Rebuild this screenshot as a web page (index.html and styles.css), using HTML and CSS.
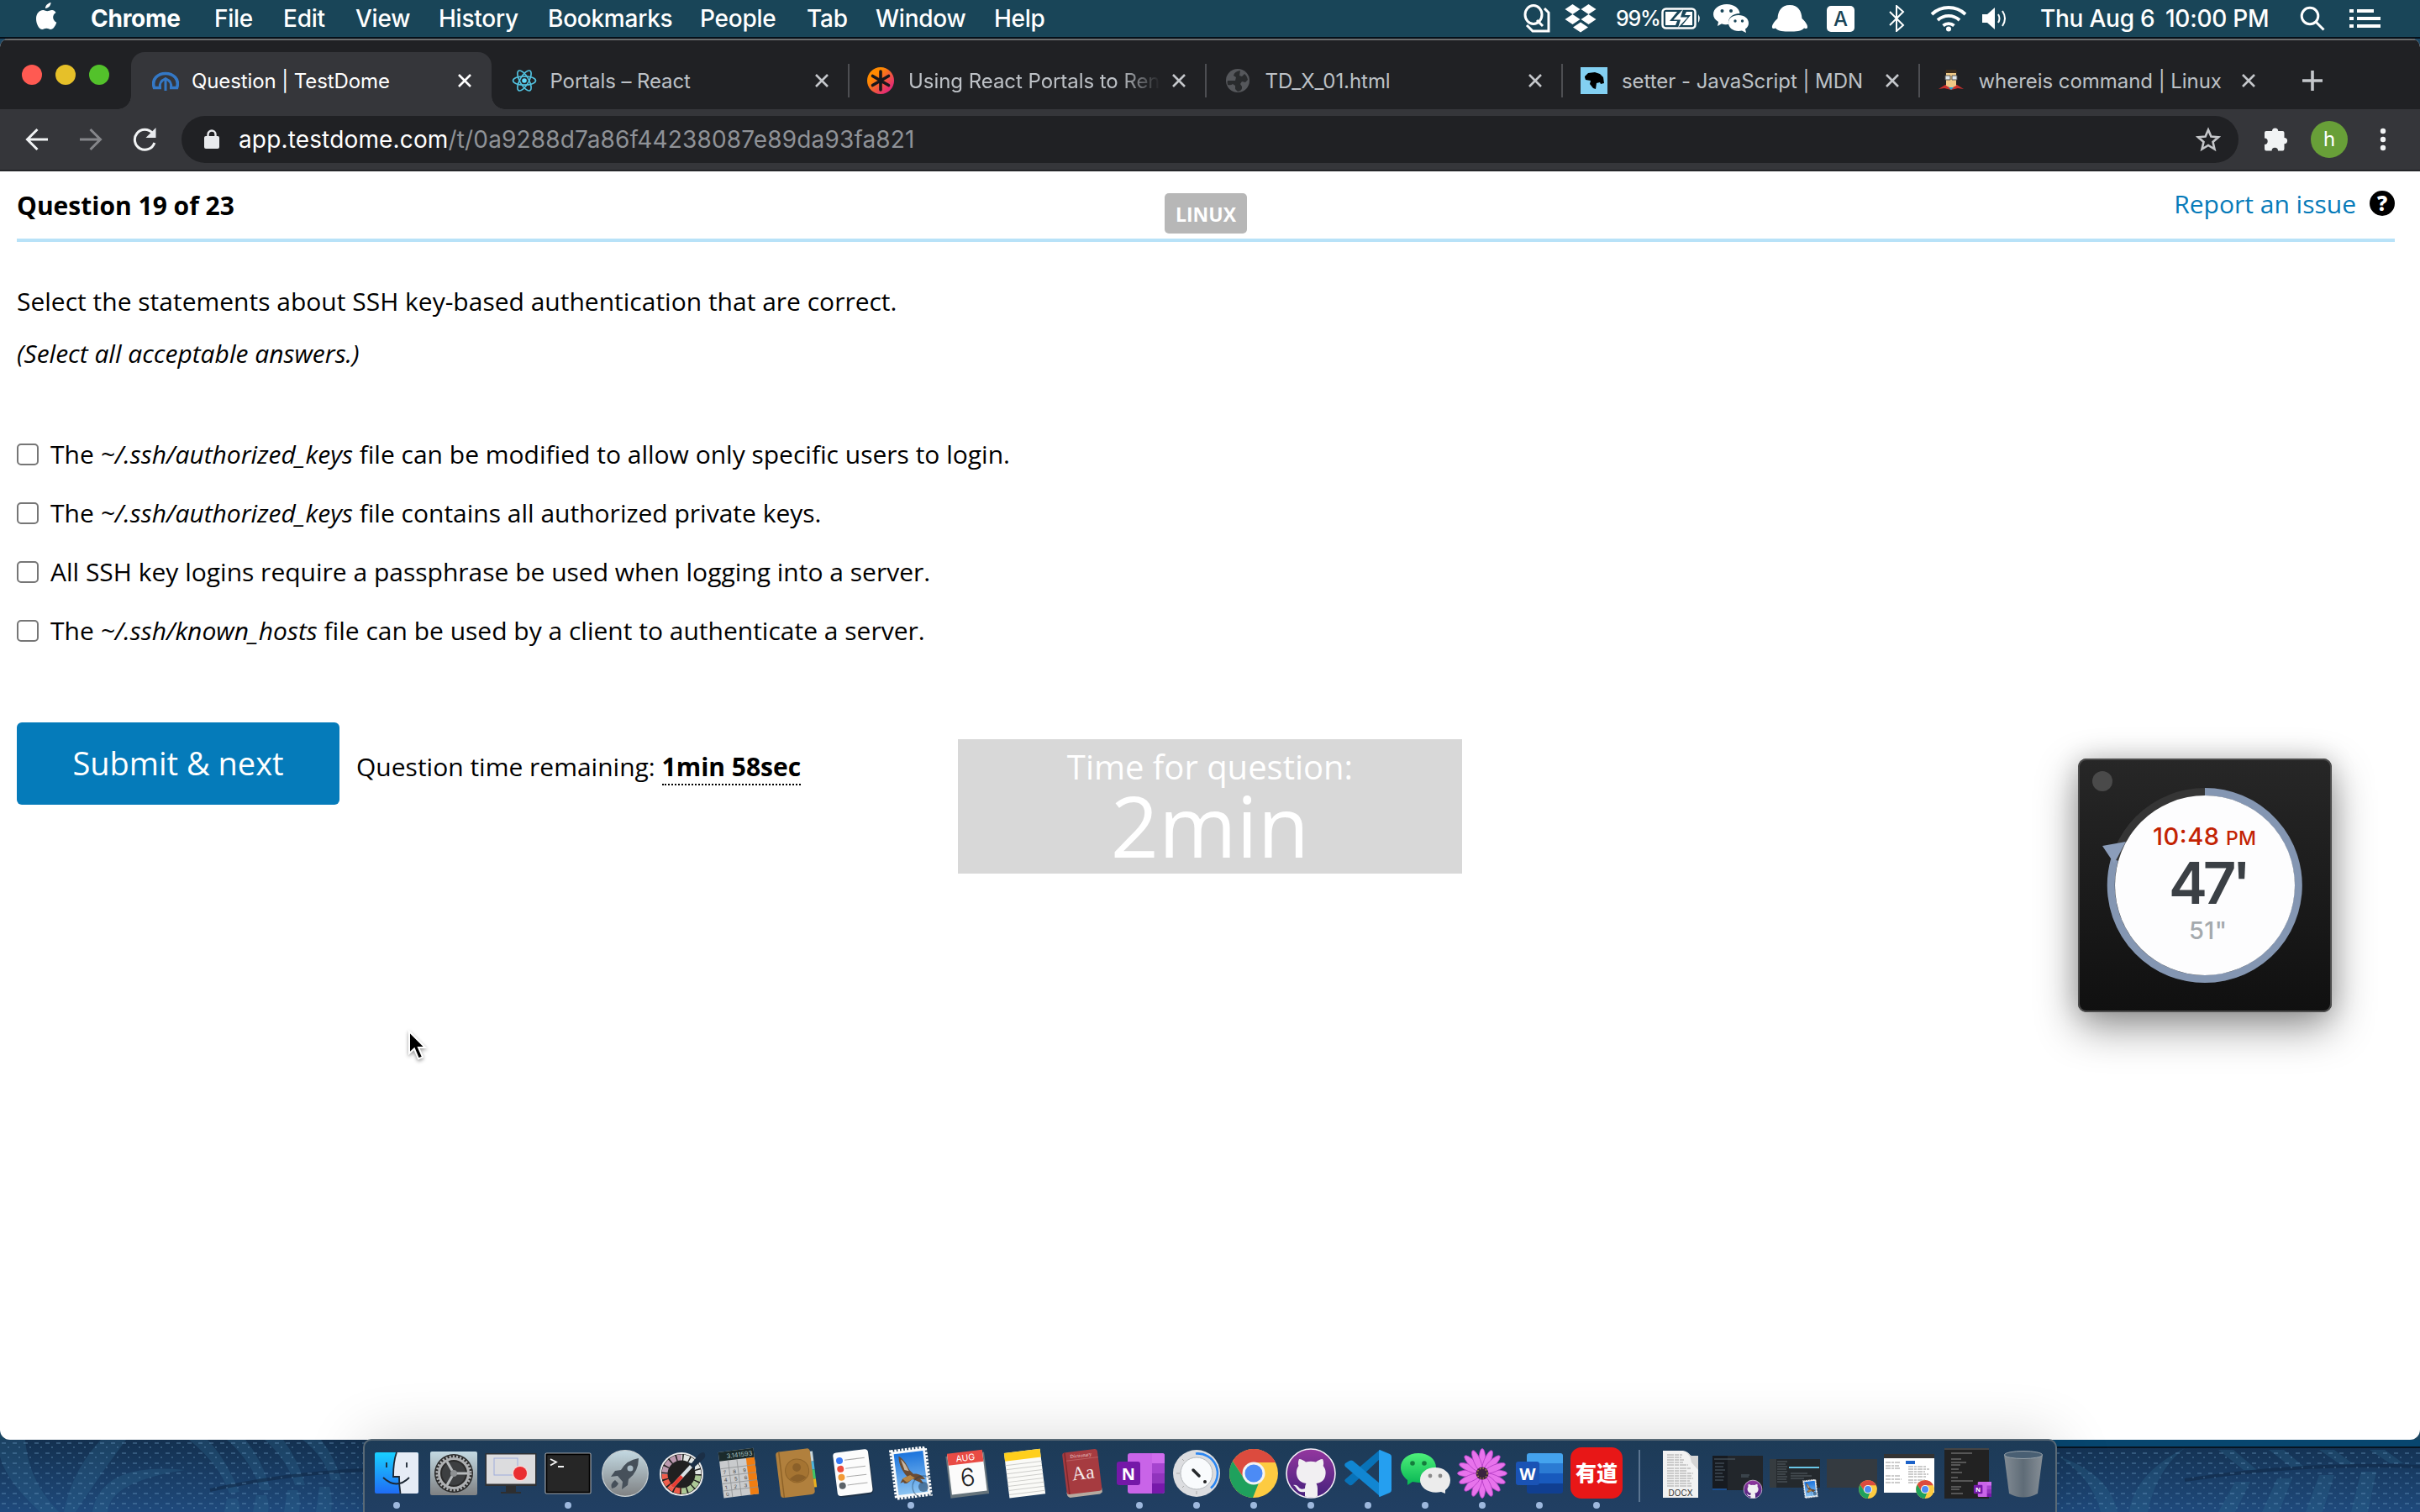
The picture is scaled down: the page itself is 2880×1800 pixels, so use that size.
FILE: index.html
```html
<!DOCTYPE html>
<html lang="en">
<head>
<meta charset="utf-8">
<title>Question | TestDome</title>
<link rel="stylesheet" href="styles.css">
</head>
<body>
<svg class="defs" width="0" height="0" aria-hidden="true">
  <defs>
    <linearGradient id="gSteel" x1="0" y1="0" x2="0" y2="1"><stop offset="0" stop-color="#c3d9e2"/><stop offset="1" stop-color="#7f8183"/></linearGradient>
    <linearGradient id="gFinder" x1="0" y1="0" x2="0" y2="1"><stop offset="0" stop-color="#19d0ff"/><stop offset="1" stop-color="#1f6cf5"/></linearGradient>
    <linearGradient id="gSky" x1="0" y1="0" x2="0" y2="1"><stop offset="0" stop-color="#1c74dc"/><stop offset="1" stop-color="#8cc4f2"/></linearGradient>
    <linearGradient id="gWechat" x1="0" y1="0" x2="0" y2="1"><stop offset="0" stop-color="#4df07a"/><stop offset="1" stop-color="#07b553"/></linearGradient>
    <linearGradient id="gOrange" x1="0" y1="0" x2="1" y2="1"><stop offset=".3" stop-color="#ff8a00"/><stop offset=".8" stop-color="#e52e71"/></linearGradient>
    <linearGradient id="gTrash" x1="0" y1="0" x2="1" y2="0"><stop offset="0" stop-color="#8d949a"/><stop offset=".5" stop-color="#66717a"/><stop offset="1" stop-color="#92989d"/></linearGradient>
    <linearGradient id="gPurple" x1="0" y1="0" x2="0" y2="1"><stop offset="0" stop-color="#94379f"/><stop offset="1" stop-color="#45207c"/></linearGradient>
    <pattern id="dashes" width="13" height="12" patternUnits="userSpaceOnUse"><path d="M2 4h5M9 9h2" stroke="#6f9cc4" stroke-width="1.800" opacity=".34"/></pattern>
    <symbol id="chrome" viewBox="0 0 64 64">
      <circle cx="32" cy="32" r="29" fill="#fdcb41"/>
      <path d="M32 3A29 29 0 0 1 58 19H32A13 13 0 0 0 20.500 38L7 17.500A29 29 0 0 1 32 3Z" fill="#dc4b3e"/>
      <path d="M7 17.500 20.700 38.500A13 13 0 0 0 38 43.500L31 61A29 29 0 0 1 7 17.500Z" fill="#1fa15d"/>
      <circle cx="32" cy="32" r="13.500" fill="#f3f3f3"/><circle cx="32" cy="32" r="10.500" fill="#4c8bf5"/>
    </symbol>
    <symbol id="github" viewBox="0 0 64 64">
      <circle cx="32" cy="32" r="29" fill="url(#gPurple)" stroke="#f5f0f7" stroke-width="1.600"/>
      <path d="M18 15c3 0 6 2 8 3.500a27 27 0 0 1 12 0c2-1.500 5-3.500 8-3.500 1.500 3 1.300 6 .7 8C49 26 50 29 49.500 33c-.7 6.500-4 10-11 11 1 2 1.500 4 1.500 6v9.500a29 29 0 0 1-15 0V54c-5 1-8-.5-10-4-1-2-2-3-4-4 3-1 5 .5 6.500 2.500C19 50.500 21 51.500 25 50c0-2 .5-4.500 1.500-6-7-1-10.500-4.500-11.500-11-.5-4 .5-7 2.500-10-.7-2-.9-5 .5-8Z" fill="#f1eff2"/>
    </symbol>
    <symbol id="mail" viewBox="0 0 64 64">
      <g transform="rotate(-7 32 32)"><rect x="11.500" y="3.500" width="41" height="56" fill="none" stroke="#fff" stroke-width="4" stroke-dasharray="2.600 1.600"/><rect x="12" y="4" width="40" height="55" fill="#f6f8fa"/><rect x="14.500" y="7" width="35" height="49" fill="url(#gSky)"/>
      <path d="M20 10c5 3 8 10 11 18l4 5c5 0 11 3 13 8l-6-1c2 2 3 4 3 6-4-2-8-5-12-7l-5 3c-3 2-6 1-6-1l-4 1 3-4 6-3c-5-7-8-16-7-25Z" fill="#6b4c33"/><path d="M22 14c4 4 6 9 8 15l-5-2Z" fill="#c6b6a3"/><path d="M21 37l10-3 5 4-10 4Z" fill="#b78645"/></g>
      <circle cx="47" cy="48" r="13" fill="none" stroke="#1f3b57" stroke-width="1.300" opacity=".45"/><circle cx="47" cy="48" r="6" fill="#22405f" opacity=".55"/>
    </symbol>
    <symbol id="onenote" viewBox="0 0 64 64">
      <rect x="18" y="8" width="44" height="48" rx="3" fill="#c964e8"/><path d="M47 8h12a3 3 0 0 1 3 3v9H47Z" fill="#d06ced"/><path d="M47 20h15v12H47Z" fill="#a644cf"/><path d="M47 32h15v12H47Z" fill="#9134bd"/><path d="M47 44h15v9a3 3 0 0 1-3 3H47Z" fill="#7719aa"/>
      <rect x="5" y="18" width="28" height="28" rx="3" fill="#7518a8"/><text x="19" y="40" class="glyph-n">N</text>
    </symbol>
  </defs>
</svg>

<nav class="menubar">
  <svg class="apple" viewBox="0 0 27 34"><path d="M18.500 0c.3 3-2.600 7-6.500 7C11.700 4 15 .6 18.500 0ZM24.500 12c-5 3-4 9.500.8 11.700C24 27.500 21.500 32 18.300 32c-2 0-2.700-1.200-5-1.200s-3 1.200-5 1.200C4.500 32 1 25.500 1 19.500 1 12.500 5.400 9 9.200 9c2.200 0 3.600 1.300 5 1.300S17.400 9 20 9c1.600 0 3.500 1 4.500 3Z"/></svg>
  <span class="app-name">Chrome</span><span>File</span><span>Edit</span><span>View</span><span>History</span><span>Bookmarks</span><span>People</span><span>Tab</span><span>Window</span><span>Help</span>
  <svg width="34" height="34" viewBox="0 0 34 34"><g class="line3"><ellipse cx="13" cy="12.500" rx="10" ry="11"/><path d="m17 19 7 7M26 5l5 5v22H12l-7-7"/></g></svg>
  <svg width="38" height="34" viewBox="0 0 38 34"><path d="m9.500 0 9 6-9 6-9-6Zm19 0 9 6-9 6-9-6Zm-19 12 9 6-9 6-9-6Zm19 0 9 6-9 6-9-6ZM19 21.500l9 6-9 6-9-6Z"/></svg>
  <span class="percent">99%</span>
  <svg width="48" height="26" viewBox="0 0 48 26"><rect x="1.500" y="1.500" width="39" height="23" rx="4" class="line25"/><path d="M44 8q3.500 5 0 10Z"/><path d="M5 5h14l-9 11h9l-2 5H5Zm25 0h7v16H25l10-12h-7Z"/><path d="M26 2 14.500 14.500H23L20 24l11.500-12.500H23Z"/></svg>
  <svg width="42" height="34" viewBox="0 0 42 34"><path d="M16 0c9 0 15 5 15.500 11C23 11 17 16 18 24c-3 .4-6 0-8-.8L5 26l1-5C2 18.500 0 15.500 0 12 0 5 7 0 16 0Z"/><path d="M30 13c7 0 12 4 12 9.500 0 3-1.500 5.500-4 7l1 4.500-5-2.500c-9 2-16-3-16-9S23 13 30 13Z"/><g class="holes"><circle cx="10.500" cy="8" r="2"/><circle cx="21" cy="8" r="2"/><circle cx="26" cy="20" r="1.700"/><circle cx="34.500" cy="20" r="1.700"/></g></svg>
  <svg width="44" height="32" viewBox="0 0 44 32"><path d="M22 0c10 0 14 7 14.500 16C41 20 43.500 24 43 27c-1 2-4 .5-4 .5C36 31.500 29 31.500 22 31.500S8 31.500 5 27.500c0 0-3 1.500-4-.5-.5-3 2-7 6.500-11C8 7 12 0 22 0Z"/></svg>
  <span class="input-source">A</span>
  <svg width="24" height="32" viewBox="0 0 24 32"><path class="line2" d="m3 8 16 16-8 7V1l8 7L3 24"/></svg>
  <svg width="44" height="32" viewBox="0 0 44 32"><g class="line35"><path d="M2 11a29 29 0 0 1 40 0M9 18a19 19 0 0 1 26 0M15.500 24.500a10 10 0 0 1 13 0" /></g><circle cx="22" cy="28.500" r="3"/></svg>
  <svg width="32" height="28" viewBox="0 0 32 28"><path d="M1 9h6l9-8v26l-9-8H1Z"/><path class="line2" d="M20 9q3 5 0 10M25 5q6 9 0 18"/></svg>
  <span>Thu Aug 6</span><span>10:00 PM</span>
  <svg width="30" height="30" viewBox="0 0 30 30"><g class="line3"><circle cx="12" cy="12" r="9.800"/><path d="m19 19 9.500 9.500"/></g></svg>
  <svg width="38" height="24" viewBox="0 0 38 24"><path d="M0 1h5v4H0Zm9 0h20v4H9ZM0 10h5v4H0Zm9 0h28v4H9ZM0 19h5v4H0Zm9 0h28v4H9Z"/></svg>
</nav>

<main class="window">
  <div class="tabstrip">
    <div class="lights"><i class="light red"></i><i class="light yellow"></i><i class="light green"></i></div>
    <div class="tab active">
      <svg class="favicon" viewBox="0 0 32 32"><g fill="none" stroke="#3478c5" stroke-width="3.600"><path d="M11 24.500H2.500C-1 14 7 7.500 16 7.500s17 6.500 13.500 17H21"/><path d="M16 28V14M9.500 24.500Q8 17 16 13.500q8 3.500 6.500 11" stroke-width="3"/></g></svg>
      <span class="title">Question | TestDome</span><svg class="close" viewBox="0 0 16 16"><path d="m1 1 14 14M15 1 1 15"/></svg>
    </div>
    <div class="tab bare">
      <svg class="favicon" viewBox="0 0 32 32"><g fill="none" stroke="#52c1de" stroke-width="1.700"><ellipse cx="16" cy="16" rx="13.500" ry="5.200"/><ellipse cx="16" cy="16" rx="13.500" ry="5.200" transform="rotate(60 16 16)"/><ellipse cx="16" cy="16" rx="13.500" ry="5.200" transform="rotate(120 16 16)"/></g><circle cx="16" cy="16" r="2.800" fill="#61dafb"/></svg>
      <span class="title">Portals – React</span><svg class="close" viewBox="0 0 16 16"><path d="m1 1 14 14M15 1 1 15"/></svg>
    </div>
    <div class="tab">
      <svg class="favicon" viewBox="0 0 32 32"><circle cx="16" cy="16" r="16" fill="url(#gOrange)"/><g stroke="#17171b" stroke-width="3.600" stroke-linecap="round"><path d="M16 5v22M6.500 10.500l19 11M6.500 21.500l19-11"/></g></svg>
      <span class="title faded">Using React Portals to Ren</span><svg class="close" viewBox="0 0 16 16"><path d="m1 1 14 14M15 1 1 15"/></svg>
    </div>
    <div class="tab">
      <svg class="favicon" viewBox="0 0 32 32"><circle cx="16" cy="16" r="14" fill="#55575b"/><path d="M19 4q-7 1-8 6l3 2-1 4H4q-1 2 0 5 4 1 6-1l3 2v4l3 3q6-1 5-6l-2-3 2-3 4 1 3-3q-1-5-4-7l-3 3-3-1Z" fill="#222326" opacity=".85"/></svg>
      <span class="title">TD_X_01.html</span><svg class="close" viewBox="0 0 16 16"><path d="m1 1 14 14M15 1 1 15"/></svg>
    </div>
    <div class="tab">
      <svg class="favicon" viewBox="0 0 32 32"><path fill="#83d0f2" d="M0 0h32v32H0z"/><path d="M5 11 9 7l8-1 6 2 4 4 1 7-4 1-1-2-4 1-1 7-3-1-4-5 1-4-6-1-1-3Z"/></svg>
      <span class="title">setter - JavaScript | MDN</span><svg class="close" viewBox="0 0 16 16"><path d="m1 1 14 14M15 1 1 15"/></svg>
    </div>
    <div class="tab">
      <svg class="favicon" viewBox="0 0 32 32"><path d="m1 26 8-5h14l8 5-7-1-8 2-8-2Z" fill="#c9302c"/><path d="M10 7h12v15l-6 3-6-3Z" fill="#efc986"/><path d="M10 3h12l1 4H9Z" fill="#3b2c1c"/><path d="M9 10h6v5H9Zm8 0h6v5h-6Z" fill="#dfe7ec" stroke="#555"/><path d="m13 24 3 3 3-3Z" fill="#1aa5dd"/></svg>
      <span class="title">whereis command | Linux</span><svg class="close" viewBox="0 0 16 16"><path d="m1 1 14 14M15 1 1 15"/></svg>
    </div>
    <svg class="newtab" viewBox="0 0 26 26"><path d="M13 1v24M1 13h24"/></svg>
  </div>

  <div class="toolbar">
    <svg width="28" height="28" viewBox="0 0 28 28"><path d="M27 14H3M14.500 2 2.500 14l12 12" class="tool"/></svg>
    <svg width="28" height="28" viewBox="0 0 28 28"><path d="M1 14h24M13.500 2l12 12-12 12" class="tool dim"/></svg>
    <svg width="30" height="30" viewBox="0 0 30 30"><path d="M24.500 7.500A12 12 0 1 0 26.800 19" class="tool"/><path d="M28.500 1v12h-12Z" fill="#e8eaed"/></svg>
    <div class="omnibox">
      <svg width="18" height="24" viewBox="0 0 18 24"><rect y="8" width="18" height="15" rx="2" fill="#e8eaed"/><path d="M4.500 9V6a4.500 4.500 0 0 1 9 0v3" fill="none" stroke="#e8eaed" stroke-width="2.400"/></svg>
      <span class="url"><b>app.testdome.com</b>/t/0a9288d7a86f44238087e89da93fa821</span>
      <svg width="30" height="30" viewBox="0 0 30 30"><path d="m15 3.500 3.400 8 8.600.8-6.500 5.700 2 8.500-7.500-4.500L7.500 26.500l2-8.500L3 12.300l8.600-.8Z" fill="none" stroke="#c4c6c9" stroke-width="2.600"/></svg>
    </div>
    <svg class="puzzle" width="30" height="30" viewBox="0 0 30 30"><path d="M11 5a3.600 3.600 0 0 1 7.200 0h5.300q2 0 2 2v6a3.600 3.600 0 0 1 0 7.200V26q0 2.500-2 2.500h-5.500a3.700 3.700 0 0 0-7.400 0H4q-2 0-2-2.500v-5a3.700 3.700 0 0 0 0-7.400V7q0-2 2-2Z"/></svg>
    <span class="avatar">h</span>
    <svg width="8" height="28" viewBox="0 0 8 28"><g fill="#f1f3f4"><circle cx="4" cy="4" r="3.200"/><circle cx="4" cy="14" r="3.200"/><circle cx="4" cy="24" r="3.200"/></g></svg>
  </div>

  <section class="page">
    <header class="page-head">
      <h1>Question 19 of 23</h1>
      <span class="tag">LINUX</span>
      <div class="report"><a>Report an issue</a><span class="help">?</span></div>
    </header>
    <p class="prompt">Select the statements about SSH key-based authentication that are correct.</p>
    <p class="hint">(Select all acceptable answers.)</p>
    <div class="options">
      <label><i class="box"></i><span>The <em>~/.ssh/authorized_keys</em> file can be modified to allow only specific users to login.</span></label>
      <label><i class="box"></i><span>The <em>~/.ssh/authorized_keys</em> file contains all authorized private keys.</span></label>
      <label><i class="box"></i><span>All SSH key logins require a passphrase be used when logging into a server.</span></label>
      <label><i class="box"></i><span>The <em>~/.ssh/known_hosts</em> file can be used by a client to authenticate a server.</span></label>
    </div>
    <div class="actions">
      <button class="submit">Submit &amp; next</button>
      <span class="remaining">Question time remaining: <b>1min 58sec</b></span>
    </div>
  </section>
</main>

<aside class="toast"><span class="toast-label">Time for question:</span><span class="toast-time">2min</span></aside>

<aside class="timer">
  <svg width="302" height="302" viewBox="0 0 302 302">
    <circle cx="29" cy="27" r="12" fill="#4a4a4a"/>
    <circle cx="151" cy="151" r="111.500" fill="none" stroke="#353535" stroke-width="9"/>
    <path d="M151 39.500A111.500 111.500 0 1 1 43.500 120.500" fill="none" stroke="#8496b2" stroke-width="9"/>
    <path d="m29 104 28-5-14 26-4-6Z" fill="#8b9dba"/>
    <circle cx="151" cy="151" r="107" fill="#fdfdfe"/>
    <text x="89" y="103" class="t-end" textLength="79">10:48</text><text x="176" y="103" class="t-pm" textLength="36">PM</text>
    <text x="108" y="173" class="t-min" textLength="98">47'</text>
    <text x="132" y="215" class="t-sec" textLength="45">51"</text>
  </svg>
</aside>

<svg class="cursor" width="28" height="40" viewBox="0 0 28 40"><path d="M4 3v26l6-5.500 5 12 5-2.200-5-11.300h8Z" stroke="#fff" stroke-width="2"/></svg>

<div class="desk">
  <svg class="wallpaper" viewBox="0 0 2880 86" preserveAspectRatio="none">
    <g fill="#2f6a90" opacity=".3">
      <path d="M0 0h30q4 50 40 86H48Q8 50 0 20ZM120 0h30q-30 40-60 86H76q10-50 44-86ZM225 0h22q20 20 38 62l-12 2Q262 30 225 0ZM270 0h22q20 24 30 60h-12Q300 26 270 0ZM315 0h22q18 24 26 54h-12Q342 24 315 0ZM360 0h22q16 20 24 48h-12Q386 20 360 0Z"/>
      <path d="M110 86q10-60 110-50Q130 50 128 86ZM270 70h12q4 6 3 16h-18ZM305 66h12q4 10 2 20h-18ZM342 60h12q4 10 2 26h-18ZM380 56h12q4 10 2 30h-18Z"/>
      <path d="M2450 20q60 20 70 66h-20q-10-40-50-66ZM2600 10q-60 30-66 76h22q10-50 44-76ZM2660 50h18l-18 36h-20ZM2710 46h18l-16 40h-20ZM2760 42h18l-14 44h-20ZM2810 38h18l-10 48h-20ZM2640 12h18l28 24h-16ZM2700 12h18l24 20h-16ZM2760 12h18l24 18h-16ZM2820 12h18l22 16h-16Z"/>
    </g>
    <path d="M250 60Q340 40 432 36M2600 48q140-22 280-16" fill="none" stroke="#102a47" stroke-width="4" opacity=".6"/>
    <rect width="2880" height="86" fill="url(#dashes)"/>
    <path d="M2430 0h450v8H2430Z" fill="#07466f"/><path d="M2430 8h450v2H2430Z" fill="#071421"/>
  </svg>
  <div class="dock">
    <div class="app"><svg viewBox="0 0 64 64"><rect x="6" y="7" width="52" height="49" rx="2" fill="url(#gFinder)"/><path d="M32 7h24q2 0 2 2v45q0 2-2 2H36q-1-9-1-20h-7Q28 18 32 7Z" fill="#e6ecf6"/><path d="M20 19v6M44 19v6M16 37q16 15 31 0M32 7Q28 18 28 36h7q0 11 1.500 20" fill="none" stroke="#1c2733" stroke-width="1.800"/></svg><i class="run"></i></div>
    <div class="app"><svg viewBox="0 0 64 64"><rect x="4" y="6" width="56" height="52" rx="2" fill="url(#gSteel)"/><circle cx="32" cy="32" r="23" fill="#2a2a2a"/><circle cx="32" cy="32" r="17.500" fill="none" stroke="#aeb0b2" stroke-width="3"/><circle cx="32" cy="32" r="20" fill="none" stroke="#aeb0b2" stroke-width="3" stroke-dasharray="2.200 2"/><circle cx="32" cy="32" r="14" fill="#3d3f41"/><path d="M32 32h16M32 32l-8-14M32 32l-8 14" stroke="#b7babc" stroke-width="3"/><circle cx="32" cy="32" r="4" fill="#8d9092"/></svg></div>
    <div class="app"><svg viewBox="0 0 64 64"><path d="M26 46h12v8h6v2H20v-2h6Z" fill="#2d2e30"/><rect x="1.500" y="8" width="61" height="39" fill="#303133"/><rect x="3" y="9.500" width="58" height="35" fill="#dcdcde"/><rect x="12" y="14" width="28" height="20" fill="none" stroke="#9eacdc"/><circle cx="43" cy="32" r="9.500" fill="#f3d7d7"/><circle cx="43" cy="32" r="8" fill="#ea2d31"/></svg></div>
    <div class="app"><svg viewBox="0 0 64 64"><rect x="5" y="8" width="54" height="48" rx="1.500" fill="#262626" stroke="#a9abad" stroke-width="1.200"/><rect x="6.500" y="9.500" width="51" height="45" fill="none" stroke="#000" stroke-width="1.500"/><path d="m11 15 7 3.500-7 4M20 24h7" fill="none" stroke="#f2f2f2" stroke-width="1.800"/></svg><i class="run"></i></div>
    <div class="app"><svg viewBox="0 0 64 64"><circle cx="32" cy="32" r="27.300" fill="url(#gSteel)" stroke="#c9d0d3" stroke-width="1.200"/><path d="M48 14q-14 2-21 14l-7 1-5 7 8-1 6 7-1 9 7-5 1-7q12-9 12-25ZM20 40q-6 4-4 10 6-1 8-6Z" fill="#46505a"/><circle cx="38" cy="26" r="3.500" fill="#a9bac4"/></svg></div>
    <div class="app"><svg viewBox="0 0 64 64"><circle cx="31" cy="33" r="25" fill="#202020" stroke="#ececec" stroke-width="2"/><g fill="none" stroke-width="7"><path d="M31 13a20 20 0 0 1 20 20" stroke="#e2e6e4"/><path d="M51 33a20 20 0 0 1-20 20" stroke="#abc795"/><path d="M31 53a20 20 0 0 1-20-20" stroke="#ee5c4b"/><path d="M11 33a20 20 0 0 1 20-20" stroke="#ba98ae"/></g><circle cx="31" cy="33" r="20" fill="none" stroke="#202020" stroke-width="8" stroke-dasharray="1.500 6.400"/><path d="m18 47 23-25 3 3-22 24Z" fill="#d8e0e4"/><path d="m18 47 12-13 3 3-11 12Z" fill="#e83c32"/><path d="m39 19 4 1 9-11q6-4 7 0 1 4-3 7l-9 8v4Z" fill="#1b2f46"/></svg></div>
    <div class="app"><svg viewBox="0 0 64 64"><g transform="rotate(-7 32 32)"><rect x="10" y="4" width="42" height="55" fill="#c9cbcd"/><path d="M10 4h42v11H10Z" fill="#1b2a2b"/><path d="M42 15h10v44H42Z" fill="#f07d11"/><path d="M20.500 15v44M31 15v44M10 24h42M10 33h42M10 42h42M10 50.500h42" stroke="#8f9193" stroke-width=".8"/><text x="50" y="12.500" class="calc-out">3.141593</text><text x="13" y="31" class="calc-key" xml:space="preserve">7   8   9</text><text x="13" y="40" class="calc-key" xml:space="preserve">4   5   6</text><text x="13" y="49" class="calc-key" xml:space="preserve">1   2   3</text><text x="13" y="57" class="calc-key">0</text></g></svg></div>
    <div class="app"><svg viewBox="0 0 64 64"><g transform="rotate(-7 32 32)"><path d="M49 8h5v12h-5z" fill="#c7d6dc"/><path d="M49 20h5v10h-5z" fill="#4bb3dc"/><path d="M49 30h5v11h-5z" fill="#3ec768"/><path d="M49 41h5v10h-5z" fill="#eab11e"/><rect x="10" y="4" width="41" height="55" rx="4" fill="#b1803d"/><path d="M14 4v55" stroke="#8e6228" stroke-width="1.500"/><circle cx="33" cy="29" r="14" fill="#a57432" stroke="#8f642a"/><circle cx="33" cy="25" r="5" fill="#8b6029"/><path d="M23 38q10-9 20 0-10 8-20 0Z" fill="#8b6029"/></g></svg></div>
    <div class="app"><svg viewBox="0 0 64 64"><g transform="rotate(-7 32 32)"><rect x="11" y="6" width="42" height="53" rx="5" fill="#1b2630" opacity=".5"/><rect x="10" y="5" width="42" height="52" rx="4" fill="#fcfcfc"/><circle cx="17" cy="15" r="4" fill="#3779f6"/><circle cx="17" cy="25" r="4" fill="#ee4d3e"/><circle cx="17" cy="35" r="4" fill="#f29b37"/><circle cx="17" cy="45" r="4" fill="#5b6268"/><path d="M23 15h24M23 25h24M23 35h24M23 45h24" stroke="#aaa"/></g></svg></div>
    <div class="app"><svg><use href="#mail"/></svg><i class="run"></i></div>
    <div class="app"><svg viewBox="0 0 64 64"><g transform="rotate(-7 32 32)"><rect x="8" y="9" width="46" height="50" fill="#66747c"/><rect x="10" y="7" width="42" height="48" fill="#fbfbfb"/><path d="M10 6h42v14H10Z" fill="#e94b45"/><text x="31" y="17" class="cal-m">AUG</text><text x="31" y="47" class="cal-d">6</text></g></svg></div>
    <div class="app"><svg viewBox="0 0 64 64"><g transform="rotate(-7 32 32)"><rect x="10" y="5" width="43" height="54" fill="#fafaf7"/><path d="M10 5h43v10H10Z" fill="#ffcf1c"/><path d="M10 20h43M10 25h43M10 30h43M10 35h43M10 40h43M10 45h43M10 50h43M10 55h43" stroke="#cdcdca"/></g></svg></div>
    <div class="app"><svg viewBox="0 0 64 64"><g transform="rotate(-7 32 32)"><path d="M11 52h42v5l-3 2H14q-4-2-3-7Z" fill="#b6aaa0"/><rect x="11" y="5" width="42" height="50" rx="3" fill="#a63b40"/><path d="M14 5v50" stroke="#7f282d" stroke-width="1.500"/><path d="M15 15h38" stroke="#c36a6c" stroke-width=".7"/><text x="33" y="12.500" class="dict-s">Dictionary</text><text x="33" y="39" class="dict">Aa</text></g></svg></div>
    <div class="app"><svg><use href="#onenote"/></svg><i class="run"></i></div>
    <div class="app"><svg viewBox="0 0 64 64"><circle cx="32" cy="32" r="28" fill="#dcdde0"/><circle cx="32" cy="32" r="19" fill="#f9fbfd" stroke="#b4b8bc"/><path d="M31 8.500a23.500 23.500 0 0 1 18 41" fill="none" stroke="#2c87f2" stroke-width="2.600"/><path d="m28 28 7 7" stroke="#25282b" stroke-width="3.500" stroke-linecap="round"/><circle cx="42" cy="42" r="2" fill="#222"/><path d="M32 53v4M8 32h4M15 15l2 2M15 49l2-2" stroke="#aaa"/></svg><i class="run"></i></div>
    <div class="app"><svg><use href="#chrome"/></svg><i class="run"></i></div>
    <div class="app"><svg><use href="#github"/></svg><i class="run"></i></div>
    <div class="app"><svg viewBox="0 0 64 64"><path d="m5 42 5 4q2 1 4-1L46 15V4L5 39q-1.500 1.500 0 3Z" fill="#0872b8"/><path d="m5 20 5-3q2-1 4 0l32 27v15L5 24q-1.500-2 0-4Z" fill="#1186d2"/><path d="m46 4 12 5q2 1 2 3v40q0 2-2 3l-12 5q-1 0-1-1V5q0-1 1-1Z" fill="#259ff0"/></svg><i class="run"></i></div>
    <div class="app"><svg viewBox="0 0 64 64"><path d="M24 8c12 0 21 7 21 17S36 43 24 43l-7-1-6 4v-6C6 36 3 31 3 25 3 15 12 8 24 8Z" fill="url(#gWechat)"/><path d="M44 25c10 0 18 6 18 15 0 5-2 9-6 12v4l-5-2c-13 3-25-4-25-14 0-9 8-15 18-15Z" fill="#ececec"/><circle cx="17" cy="20" r="2.800" fill="#147c3c"/><circle cx="31" cy="20" r="2.800" fill="#147c3c"/><circle cx="38" cy="35" r="2.400" fill="#8a8a8a"/><circle cx="50" cy="35" r="2.400" fill="#8a8a8a"/></svg><i class="run"></i></div>
    <div class="app"><svg viewBox="0 0 64 64"><g fill="#e873ec" stroke="#b53fc6" stroke-width=".8"><g id="petals"><ellipse cx="32" cy="16" rx="4" ry="13.500"/><ellipse cx="32" cy="48" rx="4" ry="13.500"/><ellipse cx="16" cy="32" rx="13.500" ry="4"/><ellipse cx="48" cy="32" rx="13.500" ry="4"/></g><use href="#petals" transform="rotate(22.500 32 32)"/><use href="#petals" transform="rotate(45 32 32)"/><use href="#petals" transform="rotate(67.500 32 32)"/></g><circle cx="32" cy="32" r="7.500" fill="#3a2440"/><circle cx="32" cy="32" r="6" fill="none" stroke="#b18a45" stroke-width="1.500" stroke-dasharray="1.500 2"/></svg><i class="run"></i></div>
    <div class="app"><svg viewBox="0 0 64 64"><path d="M17 20V11q0-3 3-3h37q3 0 3 3v9Z" fill="#44a3ee"/><path d="M17 20h43v12H17Z" fill="#2b7bd3"/><path d="M17 32h43v12H17Z" fill="#185abd"/><path d="M17 44h43v9q0 3-3 3H20q-3 0-3-3Z" fill="#103f91"/><rect x="4" y="18" width="28" height="28" rx="3" fill="#1a53b5"/><text x="18" y="40" class="glyph-n">W</text></svg><i class="run"></i></div>
    <div class="app"><svg viewBox="0 0 64 64"><rect x="1" y="1" width="62" height="61" rx="13" fill="#e81717"/><text x="32" y="41" class="youdao">有道</text></svg><i class="run"></i></div>
    <i class="divider"></i>
    <svg class="thumb docx" viewBox="0 0 44 58"><path d="M1 1h24q6 1 9 6h9v50H1Z" fill="#f2f2f2"/><path d="M25 1q9 4 10 14l8 9V7h-8Z" fill="#d5d5d5"/><path d="M6 6h18M6 9h17M6 12h20M6 15h19M6 18h25M6 22h28M6 25h24M6 28h31M6 31h29M6 34h31M6 37h27M6 40h30M6 43h30" stroke="#a3a3a3" stroke-width="1.100" stroke-dasharray="8 1 5 1"/><text x="22" y="55" class="docx-t">DOCX</text></svg>
    <svg class="thumb" viewBox="0 0 60 60"><path fill="#22262b" d="M0 9h60v41H0z"/><path fill="#171b21" d="M0 9h18v41H0z"/><path d="M2 13h25M3 18h11M3 22h10M3 26h12M3 30h9M3 34h11M3 38h10M34 32h10M34 34h9" stroke="#53606d"/><path fill="#1b4e8f" d="M0 48h17v2H0z"/><use href="#github" x="36" y="37" width="24" height="24"/></svg>
    <svg class="thumb" viewBox="0 0 60 60"><path fill="#24292d" d="M0 13h60v34H0z"/><path fill="#363c40" d="M0 13h8v34H0z"/><path d="M9 16h12M9 19h10M9 22h12M9 25h11M9 28h12M9 31h10M9 34h12M9 37h11M9 40h12M25 30h20M25 33h25M25 36h16" stroke="#596269"/><path d="M23 23h36" stroke="#69c6e6" stroke-width="2"/><use href="#mail" x="37" y="37" width="23" height="23"/></svg>
    <svg class="thumb" viewBox="0 0 60 60"><path fill="#343a40" d="M0 13h60v34H0z"/><use href="#chrome" x="37" y="37" width="24" height="24"/></svg>
    <svg class="thumb" viewBox="0 0 60 60"><path fill="#fff" d="M0 7h60v46H0z"/><path fill="#333" d="M0 7h60v5H0z"/><path d="M2 17h18M2 21h16M2 24h18M2 33h17M2 37h19M2 41h17M29 22h22M29 25h25M29 28h20M29 31h24M29 34h22M29 38h20M29 41h15" stroke="#999" stroke-width="1.200" stroke-dasharray="6 1 3 1"/><path fill="#1c62c8" d="M26 15h11v4H26z"/><use href="#chrome" x="37" y="37" width="24" height="24"/></svg>
    <svg class="thumb" viewBox="0 0 60 60"><path fill="#222" d="M4 0h53v60H4z"/><path fill="#444" d="M4 0h53v2H4z"/><path d="M12 6h25M12 13h12M12 17h18M12 20h11M12 25h9M12 29h13M12 35h8M12 39h26M12 46h12M12 49h10M12 54h14" stroke="#8a8a8a" stroke-width="1.200"/><use href="#onenote" x="37" y="37" width="24" height="24"/></svg>
    <svg class="thumb trash" viewBox="0 0 48 58"><path d="M1 6q22-8 46 0l-6 46q-17 9-34 0Z" fill="url(#gTrash)" opacity=".9"/><ellipse cx="24" cy="6" rx="22.500" ry="4.500" fill="#495f73" stroke="#97a1a9"/></svg>
  </div>
</div>
</body>
</html>
```
FILE: styles.css
```css
* { box-sizing: border-box; }
body {
  margin: 0; width: 2880px; height: 1800px; overflow: hidden; position: relative;
  display: flex; flex-direction: column;
  background: #1c4763; font-family: Inter, "Liberation Sans", sans-serif; color: #000;
}
svg { display: block; }
i { font-style: normal; }
.defs { position: absolute; }

/* menu bar */
.menubar {
  flex: none; height: 46px; padding: 0 0 0 42px; border-bottom: 2px solid #061019;
  display: grid; align-items: center;
  grid-template-columns: 66px 147px 82px 86px 99px 130px 181px 127px 82px 141px 629px 50px 61px 54px 62px 69px 66px 72px 51px 61px 70px 149px 160px 59px 40px;
  background: #194558; color: #fff; font-size: 28px; font-weight: 500; white-space: nowrap;
}
.menubar span { letter-spacing: -.25px; }
.menubar svg { fill: #fff; }
.menubar .apple { width: 27px; height: 34px; margin-top: -4px; }
.menubar .app-name { font-weight: 700; }
.menubar .percent { font-size: 25px; letter-spacing: -1.2px; }
.menubar .input-source { width: 33px; height: 31px; margin: 0; border-radius: 5px; background: #fff; color: #194558; font-size: 24px; line-height: 31px; text-align: center; }
.line2, .line25, .line3, .line35 { fill: none; stroke: #fff; stroke-width: 2; }
.line25 { stroke-width: 2.500; }
.line3 { stroke-width: 3; }
.line35 { stroke-width: 3.800; }
.holes { fill: #194558; }

/* browser */
.window {
  flex: none; height: 1668px; overflow: hidden; display: flex; flex-direction: column;
  border-radius: 10px 10px 12px 12px; background: #fff;
}
.tabstrip {
  flex: none; height: 84px; border-top: 2px solid #6b6c6d; background: #202124;
  display: flex; align-items: flex-end;
}
.lights { width: 160px; height: 82px; padding: 29px 0 0 26px; display: flex; gap: 16px; }
.light { width: 24px; height: 24px; border-radius: 50%; }
.red { background: #ff5a52; }
.yellow { background: #e6c029; }
.green { background: #53c22b; }
.tab { position: relative; width: 424.500px; height: 68px; padding: 0 23px; display: flex; align-items: center; color: #bdc1c6; font-size: 24px; }
.tab::before { content: ""; position: absolute; left: 0; top: 14px; width: 2px; height: 40px; background: #4d4e52; }
.tab.active::before, .tab.bare::before { display: none; }
.tab.active { background: #35363a; color: #fff; margin-left: -4px; padding-left: 25px; padding-right: 24px; width: 428.500px; border-radius: 16px 16px 0 0; }
.tab.active::after {
  content: ""; position: absolute; left: -16px; right: -16px; bottom: 0; height: 16px;
  background: radial-gradient(circle at 0 0, transparent 15.500px, #35363a 16px) 0 0 / 16px 16px no-repeat, radial-gradient(circle at 100% 0, transparent 15.500px, #35363a 16px) 100% 0 / 16px 16px no-repeat;
}
.favicon { width: 32px; height: 32px; flex: none; }
.title { flex: 1; margin-left: 17px; overflow: hidden; white-space: nowrap; letter-spacing: -.05px; }
.active .title, .bare .title { margin-left: 15px; letter-spacing: -.1px; }
.faded { max-width: 300px; -webkit-mask-image: linear-gradient(90deg, #000 84%, transparent 100%); mask-image: linear-gradient(90deg, #000 84%, transparent 100%); }
.close { width: 16px; height: 16px; margin: 0 0 0 auto; flex: none; fill: none; stroke: #c4c7cb; stroke-width: 2.600; }
.active .close { stroke: #fff; }
.newtab { width: 26px; height: 26px; margin: 0 0 21px 32px; stroke: #c4c7cb; stroke-width: 3.600; }
.toolbar { flex: none; height: 74px; padding: 0 40px 0 30px; border-bottom: 2px solid #252629; background: #35363a; display: flex; align-items: center; }
.toolbar > svg:nth-child(2) { margin-left: 36px; }
.toolbar > svg:nth-child(3) { margin-left: 35px; }
.tool { fill: none; stroke: #f1f3f4; stroke-width: 3; }
.dim { stroke: #85868a; }
.omnibox { width: 2448px; height: 56px; margin-left: 29px; padding: 0 21px 0 27px; border-radius: 28px; background: #202124; display: flex; align-items: center; }
.url { flex: 1; margin-left: 23px; font-size: 28px; color: #8f9297; letter-spacing: .15px; }
.url b { font-weight: 400; color: #fff; }
.toolbar .puzzle { margin-left: 29px; fill: #f1f3f4; }
.avatar { width: 44px; height: 44px; margin: 0 38px 0 27px; border-radius: 50%; background: #689f38; color: #fff; font-size: 24px; line-height: 44px; text-align: center; }

/* question page */
.page { flex: 1; padding: 0 30px 0 20px; font-family: "Open Sans", "Noto Sans", sans-serif; font-size: 30px; }
.page-head { height: 84px; border-bottom: 4px solid #b8e2f8; display: grid; grid-template-columns: 1fr 98px 1fr; }
h1 { margin: 19px 0 0; font-size: 30px; line-height: 44px; font-weight: 700; }
.tag { height: 48px; margin-top: 26px; border-radius: 5px; background: #b7b7b7; color: #fff; font-size: 23px; font-weight: 700; line-height: 50px; text-align: center; }
.report { margin-top: 16px; height: 44px; display: flex; justify-content: flex-end; align-items: center; gap: 16px; color: #057ab9; }
.help { width: 30px; height: 30px; border-radius: 50%; background: #000; color: #fff; font-size: 24px; font-weight: 800; line-height: 30px; text-align: center; }
.prompt { margin: 49px 0 0; line-height: 44px; }
.hint { margin: 18px 0 0; line-height: 44px; font-style: italic; }
.options { margin-top: 61px; }
.options label { display: flex; align-items: center; height: 70px; line-height: 68px; padding-top: 3px; }
.box { width: 26px; height: 26px; margin: 1px 14px 0 0; border: 2px solid #767676; border-radius: 5px; background: #fff; }
.actions { margin-top: 76px; display: flex; align-items: center; gap: 20px; }
.submit { width: 384px; height: 98px; padding: 0 0 3px; border: 0; border-radius: 6px; background: #057bba; color: #fff; font: 38px "Open Sans", sans-serif; }
.remaining { padding-top: 6px; }
.remaining b { border-bottom: 2px dotted #000; }

/* floating panels */
.toast { position: absolute; left: 1140px; top: 880px; width: 600px; height: 160px; background: #d8d8d8; color: #fff; font-family: "Open Sans", sans-serif; display: flex; flex-direction: column; align-items: center; }
.toast-label { font-size: 40px; line-height: 40px; margin-top: 13px; }
.toast-time { font-size: 100px; line-height: 98px; }
.timer { position: absolute; left: 2473px; top: 903px; width: 302px; height: 302px; border-radius: 10px; background: linear-gradient(#272727, #101010); box-shadow: inset 0 0 0 2px #4b4b4b, 0 18px 50px rgba(0,0,0,.42), 0 0 30px rgba(0,0,0,.16); overflow: visible; }
.timer text { font-family: Inter, sans-serif; font-weight: 500; }
.t-end { font-size: 29px; fill: #c32303; }
.t-pm { font-size: 23px; fill: #c32303; }
.timer .t-min { font-size: 69px; font-weight: 600; fill: #3b4045; }
.t-sec { font-size: 29px; fill: #a4a9ad; }
.cursor { position: absolute; left: 483px; top: 1225px; filter: drop-shadow(0 2px 2px rgba(0,0,0,.4)); }

/* desktop and dock */
.desk { position: relative; flex: none; height: 86px; display: flex; justify-content: center; background: linear-gradient(#13304f, #1f4a7c); }
.wallpaper { position: absolute; inset: 0; width: 100%; height: 100%; }
.dock {
  position: relative; width: 2016px; height: 90px; margin-top: -1px; padding: 7px 15px 0 4px;
  border: 2px solid #5a6a76; border-radius: 10px 10px 0 0; background: linear-gradient(#1d3b57, #213f63);
  box-shadow: 0 0 70px rgba(0,0,0,.16); display: flex;
}
.app { width: 68px; flex: none; display: flex; flex-direction: column; align-items: center; gap: 2px; }
.app svg { width: 64px; height: 64px; }
.run { width: 8px; height: 8px; border-radius: 50%; background: #9db8dd; }
.divider { flex: none; width: 2px; height: 62px; margin: 4px 26px 0 16px; background: #5a7490; }
.thumb { width: 60px; height: 60px; flex: none; margin: 2px 8px 0 0; }
.thumb.docx { width: 44px; height: 58px; margin: 4px 16px 0 0; }
.thumb.trash { width: 48px; height: 58px; margin: 4px 0 0 6px; }
.glyph-n { font: 700 20px "Open Sans", sans-serif; fill: #fff; text-anchor: middle; }
.calc-out { font: 7.500px Inter, sans-serif; fill: #a9c3c3; text-anchor: end; }
.calc-key { font: 6px Inter, sans-serif; fill: #444; letter-spacing: .8px; }
.cal-m { font: 10.500px Inter, sans-serif; fill: #fff; text-anchor: middle; }
.cal-d { font: 300 29px Inter, sans-serif; fill: #222; text-anchor: middle; }
.dict-s { font: 6px "Liberation Serif", serif; fill: #ecd0d0; text-anchor: middle; }
.dict { font: 23px "Liberation Serif", serif; fill: #f4eaea; text-anchor: middle; }
.youdao { font: 900 25px "Noto Sans CJK SC", sans-serif; fill: #fff; text-anchor: middle; }
.docx-t { font: 10px Inter, sans-serif; fill: #333; text-anchor: middle; }
```
